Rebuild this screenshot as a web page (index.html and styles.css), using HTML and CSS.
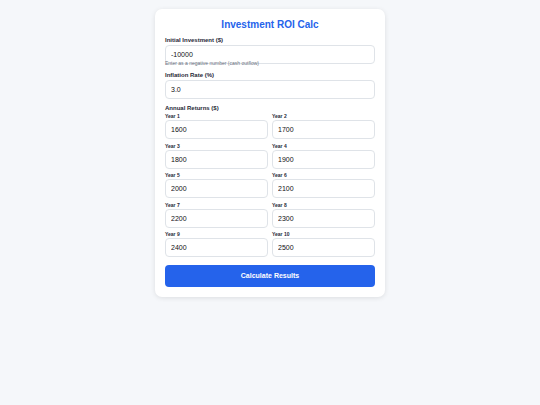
FILE: index.html
```html
<!DOCTYPE html>
<html lang="en">
  <head>
    <meta charset="utf-8" />
    <meta name="viewport" content="width=device-width, initial-scale=1" />
    <title>Investment ROI Calc</title>
    <link rel="stylesheet" href="styles.css">
  </head>
  <body>
    <div class="calc-card">
      <h1>Investment ROI Calc</h1>
      <div class="field">
        <label for="initial">Initial Investment ($)</label>
        <input type="text" id="initial" value="-10000" />
        <small class="hint">Enter as a negative number (cash outflow)</small>
      </div>
      <div class="field">
        <label for="inflation">Inflation Rate (%)</label>
        <input type="text" id="inflation" value="3.0" />
      </div>
      <div class="field">
        <label>Annual Returns ($)</label>
        <div class="returns-grid">
          <div class="year"><label for="y1">Year 1</label><input type="text" id="y1" value="1600" /></div>
          <div class="year"><label for="y2">Year 2</label><input type="text" id="y2" value="1700" /></div>
          <div class="year"><label for="y3">Year 3</label><input type="text" id="y3" value="1800" /></div>
          <div class="year"><label for="y4">Year 4</label><input type="text" id="y4" value="1900" /></div>
          <div class="year"><label for="y5">Year 5</label><input type="text" id="y5" value="2000" /></div>
          <div class="year"><label for="y6">Year 6</label><input type="text" id="y6" value="2100" /></div>
          <div class="year"><label for="y7">Year 7</label><input type="text" id="y7" value="2200" /></div>
          <div class="year"><label for="y8">Year 8</label><input type="text" id="y8" value="2300" /></div>
          <div class="year"><label for="y9">Year 9</label><input type="text" id="y9" value="2400" /></div>
          <div class="year"><label for="y10">Year 10</label><input type="text" id="y10" value="2500" /></div>
        </div>
      </div>
      <button class="calc-btn">Calculate Results</button>
    </div>
  </body>
</html>
```
FILE: styles.css
```css
body {
  font-family: "Liberation Sans", Arial, sans-serif;
  background-color: #f5f7fa;
  margin: 0;
  padding: 9px 0;
  color: #1f2937;
}
.calc-card {
  width: 230px;
  margin: 0 auto;
  padding: 10px;
  box-sizing: border-box;
  background-color: #fff;
  border-radius: 7px;
  box-shadow: 0 1px 5px rgba(0, 0, 0, 0.1);
}
.calc-card h1 {
  margin: 0 0 6px;
  font-size: 10px;
  line-height: 12px;
  text-align: center;
  color: #2563eb;
}
.field {
  display: flex;
  flex-direction: column;
  margin-bottom: 6px;
}
.field > label {
  font-size: 6px;
  line-height: 7px;
  font-weight: bold;
  margin-bottom: 1px;
}
.field input,
.year input {
  width: 100%;
  min-width: 0;
  height: 19px;
  box-sizing: border-box;
  padding: 0 5px;
  border: 1px solid #dfe3e8;
  border-radius: 4px;
  font-family: inherit;
  font-size: 7px;
  color: #111;
  background: #fff;
}
.hint {
  font-size: 5px;
  line-height: 6px;
  color: #6b7280;
  margin-top: -4px;
}
.returns-grid {
  display: grid;
  grid-template-columns: 1fr 1fr;
  column-gap: 4px;
  row-gap: 3.5px;
}
.year {
  display: flex;
  flex-direction: column;
  min-width: 0;
}
.year label {
  font-size: 5px;
  line-height: 6px;
  font-weight: bold;
  margin-bottom: 1px;
}
.calc-btn {
  width: 100%;
  height: 21.5px;
  margin-top: 2px;
  border: none;
  border-radius: 4px;
  background-color: #2563eb;
  color: #fff;
  font-family: inherit;
  font-size: 7px;
  font-weight: bold;
  cursor: pointer;
}
```
